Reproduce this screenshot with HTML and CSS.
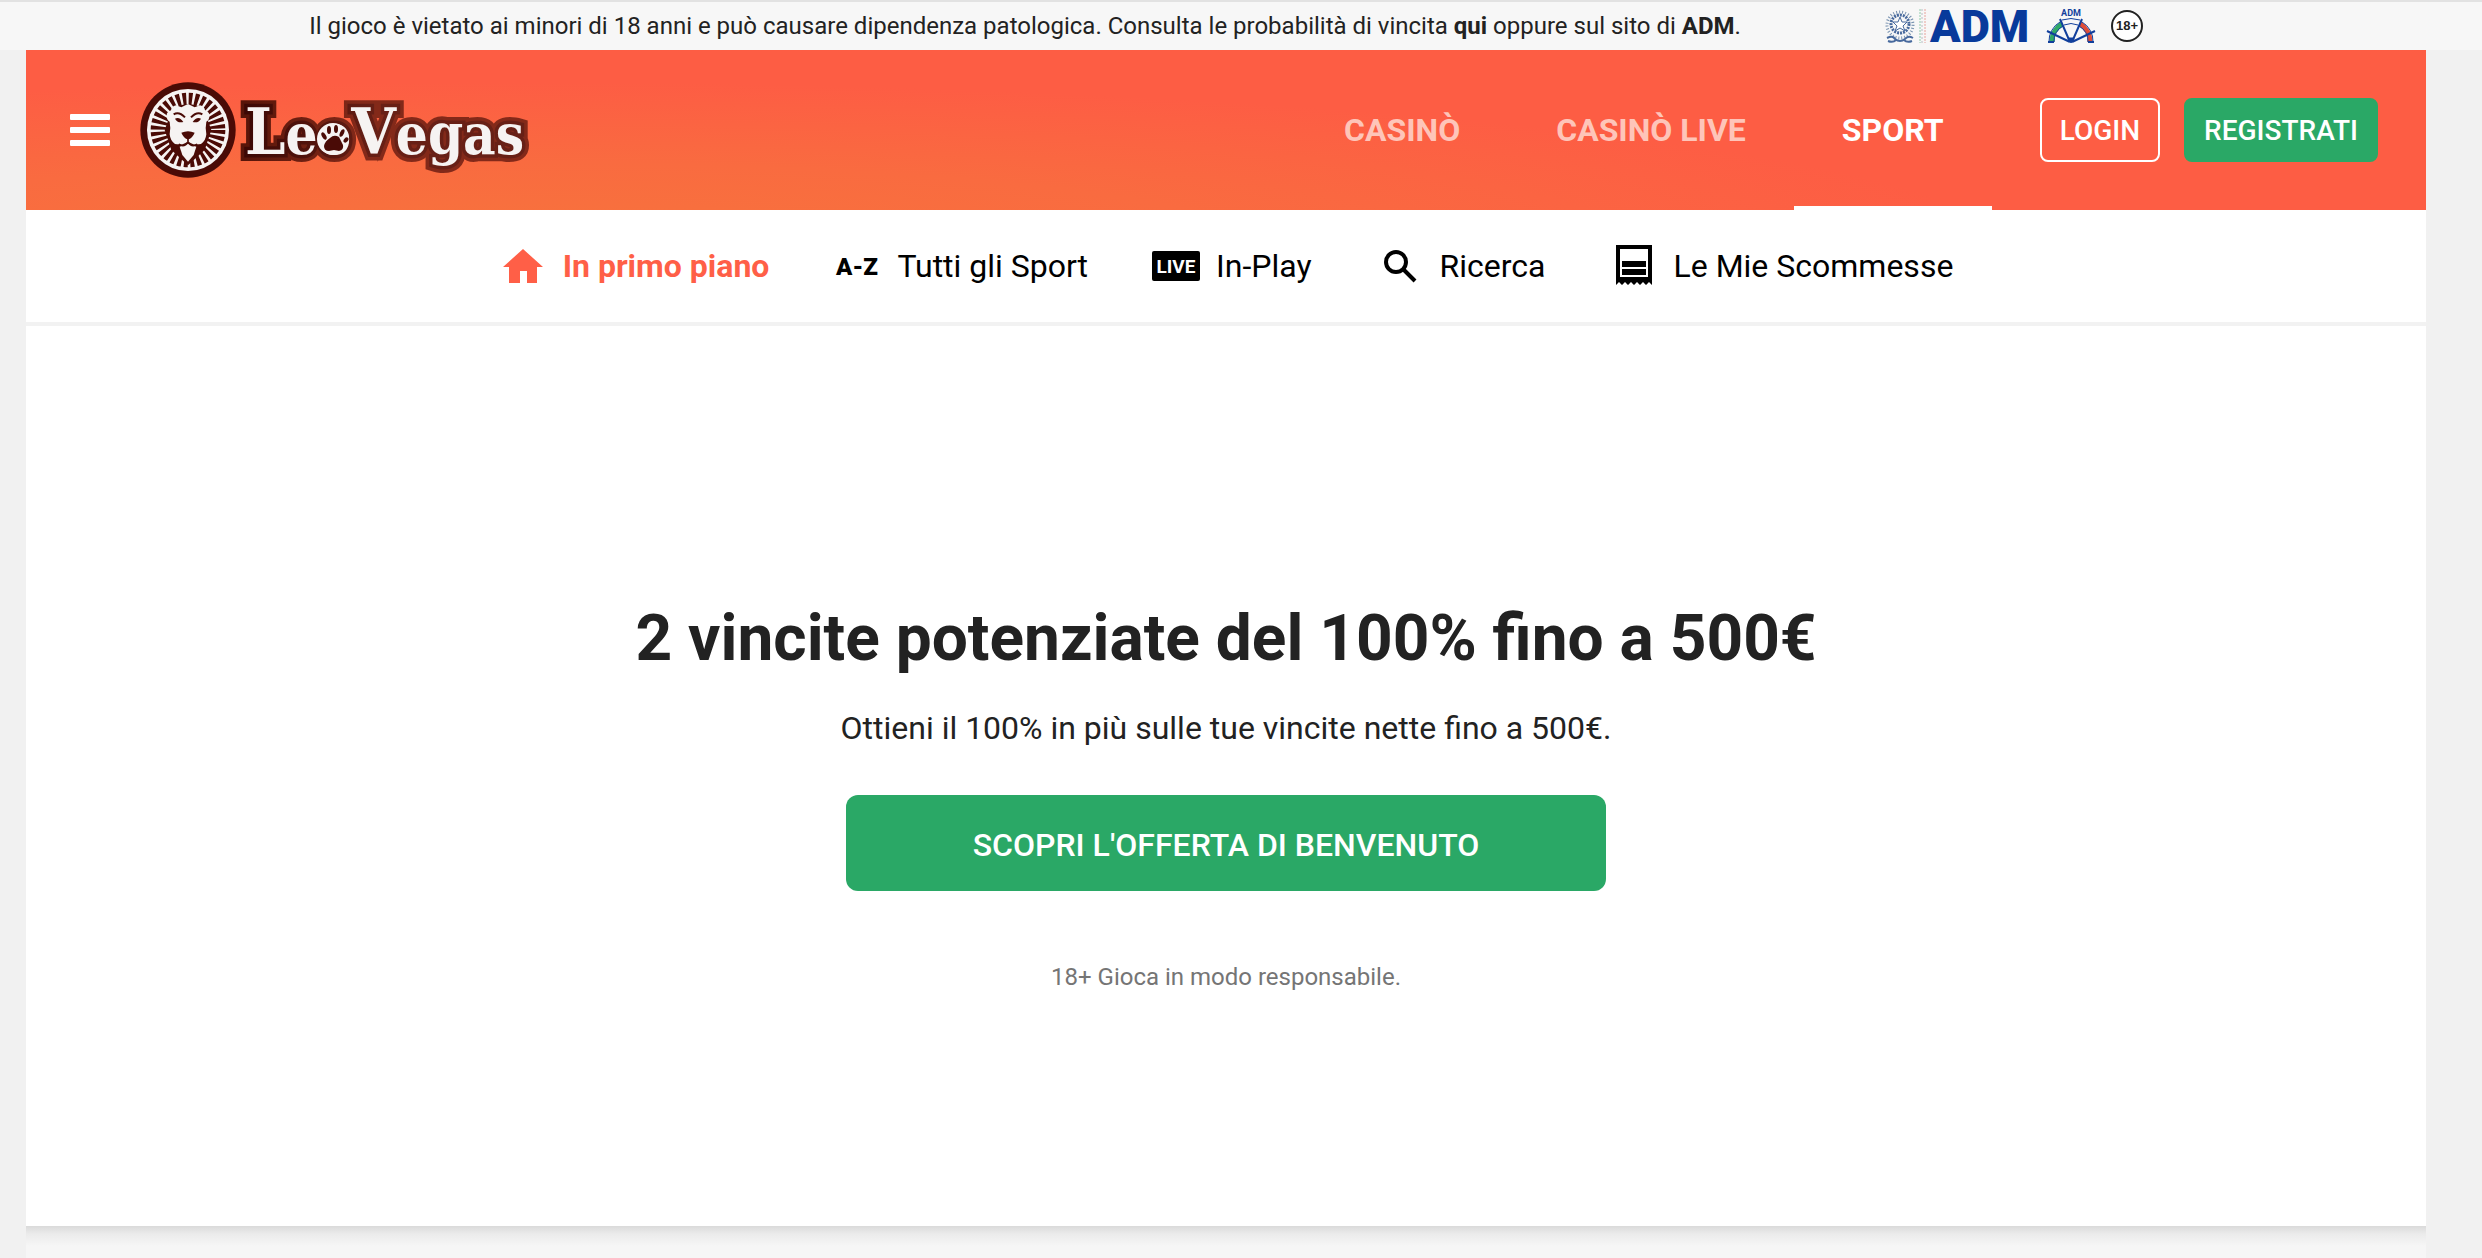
FILE: index.html
```html
<!DOCTYPE html>
<html lang="it">
<head>
<meta charset="utf-8">
<meta name="viewport" content="width=device-width, initial-scale=1">
<title>LeoVegas Sport</title>
<link rel="stylesheet" href="styles.css">
</head>
<body>
<div class="notice">
  <p class="notice-text">Il gioco è vietato ai minori di 18 anni e può causare dipendenza patologica. Consulta le probabilità di vincita <a href="#qui">qui</a> oppure sul sito di <a href="#adm">ADM</a>.</p>
  <div class="notice-logos">
    <svg class="adm-logo" viewBox="0 0 146 36" role="img" aria-label="ADM">
      <g fill="none" stroke="#47699d">
        <circle cx="15" cy="16" r="9" stroke-width="3" stroke-dasharray="2 1"/>
        <circle cx="15" cy="17" r="13" stroke="#7892b0" stroke-width="3" stroke-dasharray="1 2"/>
        <path d="M15 9l2 5h5l-4 4 2 5-5-3-5 3 2-5-4-4h5z" fill="#fff" stroke-width="1"/>
        <path d="M2 30q6-3 8 1q5 4 10 0q3-4 8-1M3 33q5 2 8-1M27 33q-5 2-8-1" stroke-width="2"/>
      </g>
      <path d="M35 1v34" stroke="#8fcdaa" stroke-dasharray="2 1"/>
      <path d="M37 1v34" stroke="#b8bdc4" stroke-dasharray="2 2"/>
      <path d="M40 1v34" stroke="#e8a49c" stroke-dasharray="2 1"/>
      <text class="adm-word" x="45" y="34">ADM</text>
    </svg>
    <svg class="adm-wheel" viewBox="0 0 50 36" role="img" aria-label="ADM gioco sicuro">
      <path d="M6 34A20 20 0 0 1 16 16" fill="none" stroke="#2fa968" stroke-width="5"/>
      <path d="M34 16A20 20 0 0 1 44 34" fill="none" stroke="#df4d38" stroke-width="5"/>
      <g fill="none" stroke="#113f9c">
        <path d="M3 34A22 22 0 0 1 14 14M8 34A17 17 0 0 1 17 18M36 14A22 22 0 0 1 47 34M33 18A17 17 0 0 1 42 34M16 12q9-3 18 0M18 17q7-3 14 0" stroke-width="1"/>
        <path d="M24 34L14 11M26 34L36 11M24 34L1 23M26 34L49 23M2 34h6M42 34h6" stroke-width="2"/>
        <path d="M22 30l3 5 3-5z" fill="#113f9c"/>
      </g>
      <text class="wheel-word" x="25" y="8">ADM</text>
    </svg>
    <svg class="age-mark" viewBox="0 0 32 32" role="img" aria-label="18+">
      <circle cx="16" cy="16" r="15" fill="#fff" stroke="#222" stroke-width="2"/>
      <text class="age-word" x="16" y="20">18+</text>
    </svg>
  </div>
</div>

<div class="page">
  <header class="header">
    <button class="menu" type="button" aria-label="Menu"><span></span><span></span><span></span></button>
    <a class="brand" href="#home" aria-label="LeoVegas">
      <svg class="brand-logo" viewBox="0 0 390 100" aria-hidden="true">
        <defs>
          <linearGradient id="edge" gradientUnits="userSpaceOnUse" x1="105" y1="0" x2="220" y2="0">
            <stop offset="0" stop-color="#571509"/><stop offset="1" stop-color="#832919"/>
          </linearGradient>
          <linearGradient id="depth" gradientUnits="userSpaceOnUse" x1="105" y1="0" x2="240" y2="0">
            <stop offset="0" stop-color="#3c0804"/><stop offset="1" stop-color="#682016"/>
          </linearGradient>
        </defs>
        <g transform="translate(-10 -13.333) scale(.33333)">
          <circle cx="174" cy="190" r="143" fill="#4a0b06"/>
          <circle cx="174" cy="190" r="123" fill="#f6f3f2"/>
          <circle cx="174" cy="190" r="80" fill="none" stroke="#4a0b06" stroke-width="64" pathLength="64" stroke-dasharray="1.2 .8"/>
          <path d="M126 130Q174 94 222 130L244 190L224 250L174 296L124 250L104 190Z" fill="#4a0b06"/>
          <path d="M138 116l16 6 20-10 20 10 16-6q14 4 15 15q14 5 13 16q0 13-9 18q-4 20 0 38q-2 20-16 29l-20 2-19-9-19 9-20-2q-14-9-16-29q4-18 0-38q-9-5-9-18q-1-11 13-16q1-11 15-15z" fill="#f6f3f2"/>
          <path d="M149 240l25-9 25 9-8 25-17 20-17-20z" fill="#f6f3f2"/>
          <path d="M131 143q16-10 34 9M183 152q18-19 34-9" fill="none" stroke="#4a0b06" stroke-width="6"/>
          <path d="M135 156q14-6 25 10q-18 4-25-10zM213 156q-14-6-25 10q18 4 25-10zM154 198q20-9 40 0q-7 17-20 20q-13-3-20-20z" fill="#4a0b06"/>
          <path d="M174 210v18M146 233q17 10 28-6q11 16 28 6" fill="none" stroke="#4a0b06" stroke-width="5"/>
        </g>
        <text class="wordmark wordmark-edge" x="105" y="74"><tspan class="cap">L</tspan>eo<tspan class="cap">V</tspan>egas</text>
        <text class="wordmark wordmark-depth" x="105" y="74"><tspan class="cap">L</tspan>eo<tspan class="cap">V</tspan>egas</text>
        <text class="wordmark" x="105" y="74"><tspan class="cap">L</tspan>eo<tspan class="cap">V</tspan>egas</text>
        <g transform="translate(-1 -1)">
          <ellipse cx="194" cy="60" rx="16" ry="16" fill="#f6f3f2"/>
          <path d="M185 67q1-5 6-8q4-4 9-1l4 8q1 5-4 6l-5-1-5 1q-5 0-5-5z" fill="#4a0b06"/>
          <g fill="#4a0b06"><ellipse cx="185" cy="57" rx="2" ry="4" transform="rotate(-30 185 57)"/><ellipse cx="190" cy="51" rx="2" ry="4"/><ellipse cx="197" cy="50" rx="2" ry="4"/><ellipse cx="203" cy="54" rx="2" ry="4" transform="rotate(25 203 54)"/><ellipse cx="207" cy="61" rx="2" ry="3" transform="rotate(40 207 61)"/></g>
        </g>
      </svg>
    </a>
    <nav class="tabs" aria-label="Prodotti">
      <a class="tab" href="#casino">CASINÒ</a>
      <a class="tab" href="#live">CASINÒ LIVE</a>
      <a class="tab tab-active" href="#sport" aria-current="page">SPORT</a>
    </nav>
    <div class="account">
      <button class="btn btn-login" type="button">LOGIN</button>
      <button class="btn btn-register" type="button">REGISTRATI</button>
    </div>
  </header>

  <nav class="subnav" aria-label="Sport">
    <a class="subnav-item subnav-active" href="#primo-piano">
      <svg class="icon" viewBox="0 0 48 48" aria-hidden="true"><path d="M24 7L4 25h6v16h11V29h7v12h10V25h6z" fill="currentColor"/></svg>In primo piano</a>
    <a class="subnav-item" href="#tutti">
      <svg class="icon" viewBox="0 0 48 48" aria-hidden="true"><text class="az-word" x="24" y="33">A-Z</text></svg>Tutti gli Sport</a>
    <a class="subnav-item" href="#in-play">
      <svg class="icon" viewBox="0 0 48 48" aria-hidden="true"><rect y="9" width="48" height="30" rx="2"/><text class="live-word" x="24" y="31">LIVE</text></svg>In-Play</a>
    <a class="subnav-item" href="#ricerca">
      <svg class="icon" viewBox="0 0 48 48" aria-hidden="true"><g fill="none" stroke="#000"><circle cx="20" cy="20" r="10" stroke-width="4"/><path d="M27 27l12 12" stroke-width="4"/></g></svg>Ricerca</a>
    <a class="subnav-item" href="#scommesse">
      <svg class="icon" viewBox="0 0 48 48" aria-hidden="true"><path d="M6 3h36v40l-3-3-3 3-3-3-3 3-3-3-3 3-3-3-3 3-3-3-3 3-3-3-3 3zM10 7v28h28V7z" fill-rule="evenodd"/><path d="M12 19h24v6H12zM12 27h24v6H12z"/></svg>Le Mie Scommesse</a>
  </nav>

  <main class="hero">
    <h1 class="hero-title">2 vincite potenziate del 100% fino a 500€</h1>
    <p class="hero-text">Ottieni il 100% in più sulle tue vincite nette fino a 500€.</p>
    <button class="cta" type="button">SCOPRI L'OFFERTA DI BENVENUTO</button>
    <p class="hero-note">18+ Gioca in modo responsabile.</p>
  </main>
  <div class="after"></div>
</div>
</body>
</html>
```
FILE: styles.css
```css
* { box-sizing: border-box; }

body {
  margin: 0;
  min-height: 100vh;
  display: flex;
  flex-direction: column;
  background: #f1f1f1;
  color: #222;
  font-family: Roboto, "Liberation Sans", sans-serif;
}

p, h1 { margin: 0; }
a { color: inherit; text-decoration: none; }
button { border: 0; padding: 0; font-family: inherit; cursor: pointer; }
svg { display: block; flex: none; overflow: visible; }

/* Legal notice */
.notice {
  display: flex;
  align-items: center;
  justify-content: center;
  gap: 144px;
  padding-right: 30px;
  border-top: 2px solid #e2e2e2;
  background: #f7f7f7;
}
.notice-text { font-size: 24px; line-height: 48px; }
.notice-text a { font-weight: 700; }
.notice-logos { display: flex; align-items: center; gap: 15px; }
.adm-logo { width: 146px; height: 36px; }
.adm-wheel { width: 50px; height: 36px; }
.age-mark { width: 32px; height: 32px; }
.adm-word { font-size: 45px; font-weight: 900; fill: #083a9b; }
.wheel-word { font-size: 9px; font-weight: 700; fill: #113f9c; text-anchor: middle; }
.age-word { font: 700 13px "Liberation Sans", sans-serif; fill: #222; text-anchor: middle; }

/* Page column */
.page {
  flex: 1;
  display: flex;
  flex-direction: column;
  margin: 0 56px 0 26px;
  background: #fff;
}

/* Header */
.header {
  display: flex;
  align-items: center;
  padding: 0 48px 0 44px;
  background: radial-gradient(62% 100% at 20% 120%, #f7733c 0, #f96b40 50%, #fd5d44 100%);
}
.menu {
  display: flex;
  flex-direction: column;
  gap: 7px;
  width: 40px;
  background: none;
}
.menu span { height: 6px; border-radius: 1px; background: #fff; }
.brand { margin-left: 30px; }
.brand-logo { width: 390px; height: 100px; }
.wordmark {
  font: 700 56px "DejaVu Serif Condensed", "DejaVu Serif", serif;
  fill: #f6f3f2;
}
.wordmark .cap { font-size: 64px; }
.wordmark-edge { stroke: url(#edge); stroke-width: 14px; }
.wordmark-depth { stroke: url(#depth); stroke-width: 7px; }

.tabs { display: flex; margin-left: auto; }
.tab {
  padding: 4px 48px 0;
  border-bottom: 4px solid transparent;
  font-size: 32px;
  font-weight: 700;
  line-height: 152px;
  color: #fec5b9;
}
.tab-active { border-color: #fff; color: #fff; }

.account { display: flex; gap: 24px; margin-left: 48px; }
.btn {
  height: 64px;
  padding: 0 18px;
  border: 2px solid #fff;
  border-radius: 8px;
  font-size: 28px;
  font-weight: 500;
  color: #fff;
}
.btn-login { background: transparent; }
.btn-register { border-color: #2aa866; background: #2aa866; }

/* Sport navigation */
.subnav {
  display: flex;
  justify-content: center;
  gap: 64px;
  border-bottom: 4px solid #f2f2f2;
}
.subnav-item {
  display: flex;
  align-items: center;
  gap: 16px;
  font-size: 32px;
  line-height: 112px;
  color: #000;
}
.subnav-active { font-weight: 700; color: #ff5f47; }
.icon { width: 48px; height: 48px; }
.az-word,
.live-word { font-weight: 900; line-height: 1; text-anchor: middle; }
.az-word { font-size: 24px; }
.live-word { font-size: 19px; font-weight: 700; fill: #fff; }

/* Offer */
.hero {
  display: flex;
  flex-direction: column;
  align-items: center;
  padding: 273px 48px 233px;
  text-align: center;
}
.hero-title { font-size: 64px; line-height: 80px; }
.hero-text { margin-top: 25px; font-size: 32px; line-height: 48px; }
.cta {
  width: 760px;
  max-width: 100%;
  height: 96px;
  margin-top: 43px;
  padding-top: 4px;
  border-radius: 12px;
  background: #2aa866;
  font-size: 32px;
  font-weight: 500;
  color: #fff;
}
.hero-note { margin-top: 70px; font-size: 24px; line-height: 32px; color: #757575; }

.after {
  flex: 1;
  min-height: 32px;
  background: #f6f6f6 linear-gradient(#dadada, #ebebeb 8px, #f6f6f6 20px);
}
```
